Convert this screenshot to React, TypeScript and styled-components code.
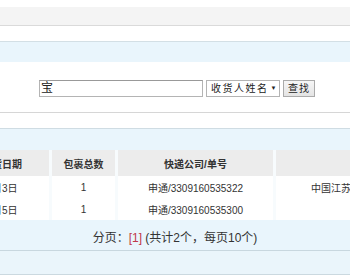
import React from "react";
import styled, { createGlobalStyle } from "styled-components";

const GlobalStyle = createGlobalStyle`
  body {
    margin: 0;
    background: #fff;
    font-family: "Liberation Sans", "Noto Sans CJK SC", sans-serif;
    color: #333;
    overflow: hidden;
  }
`;

const Page = styled.div`
  width: 350px;
  height: 280px;
  overflow: hidden;
  padding-top: 7px;
  box-sizing: border-box;
`;

const TopBar = styled.div`
  height: 18px;
  background: #f4f4f4;
  border-bottom: 1px solid #dadada;
`;

const Gap = styled.div<{ h: number }>`
  height: ${(p) => p.h}px;
  background: #fff;
`;

const TitleBar = styled.div`
  height: 20px;
  border-top: 1px solid #d3dfe5;
  background: #e9f5fc;
`;

const SearchArea = styled.div`
  height: 51px;
  box-sizing: border-box;
  padding: 18px 0 0 39px;
  border-bottom: 1px solid #d6d6d6;
  display: flex;
  align-items: flex-start;
  gap: 3px;
`;

const Input = styled.div`
  width: 164px;
  height: 17px;
  box-sizing: border-box;
  border: 1px solid #b4b4b4;
  border-top-color: #999;
  background: #fff;
  font-size: 12px;
  line-height: 15px;
  padding-left: 1px;
  color: #222;
`;

const Select = styled.div`
  width: 74px;
  height: 17px;
  box-sizing: border-box;
  border: 1px solid #b4b4b4;
  background: #fff;
  font-size: 10px;
  letter-spacing: 1.5px;
  line-height: 15px;
  padding-left: 4px;
  color: #222;
  display: flex;
  align-items: center;
  gap: 2px;
`;

const Arrow = styled.span`
  font-size: 6px;
  letter-spacing: 0;
`;

const Button = styled.div`
  width: 32px;
  height: 17px;
  box-sizing: border-box;
  border: 1px solid #aaa;
  background: linear-gradient(#f6f6f6, #e4e4e4);
  font-size: 10px;
  letter-spacing: 1px;
  line-height: 15px;
  text-align: center;
  color: #222;
`;

const Panel = styled.div`
  border-top: 1px solid #cfdce3;
  background: #e9f5fc;
  padding-top: 21px;
`;

const Table = styled.table`
  width: 527px;
  min-width: 527px;
  margin-left: -48px;
  border-collapse: separate;
  border-spacing: 3px 0;
  background: #f7fbfd;
  font-size: 10px;
  table-layout: fixed;
`;

const Th = styled.th<{ w: number }>`
  width: ${(p) => p.w}px;
  height: 26px;
  padding: 0;
  background: #ececec;
  font-weight: bold;
  color: #333;
  text-align: center;
  white-space: nowrap;
`;

const Td = styled.td`
  height: 22px;
  padding: 0;
  background: #fff;
  text-align: center;
  color: #333;
  white-space: nowrap;
  overflow: hidden;
`;

const Paging = styled.div`
  height: 31px;
  box-sizing: border-box;
  padding-top: 8px;
  line-height: 20px;
  text-align: center;
  font-size: 12px;
  color: #333;
  border-bottom: 1px solid #c8d7df;
`;

const Current = styled.span`
  color: #c0394a;
`;

const Footer = styled.div`
  height: 23px;
  background: #eaf5fb;
  border-bottom: 1px solid #cbd9e0;
`;

const rows = [
  { date: "2月3日", total: 1, express: "申通/3309160535322", addr: "中国江苏省苏州市吴中区某路" },
  { date: "2月5日", total: 1, express: "申通/3309160535300", addr: "" },
];

export default function App() {
  return (
    <Page>
      <GlobalStyle />
      <TopBar />
      <Gap h={15} />
      <TitleBar />
      <SearchArea>
        <Input>宝</Input>
        <Select>
          收货人姓名<Arrow>▼</Arrow>
        </Select>
        <Button>查找</Button>
      </SearchArea>
      <Gap h={15} />
      <Panel>
        <Table>
          <thead>
            <tr>
              <Th w={94}>发货日期</Th>
              <Th w={63}>包裹总数</Th>
              <Th w={155}>快递公司/单号</Th>
              <Th w={200}></Th>
            </tr>
          </thead>
          <tbody>
            {rows.map((r) => (
              <tr key={r.express}>
                <Td>{r.date}</Td>
                <Td>{r.total}</Td>
                <Td>{r.express}</Td>
                <Td>{r.addr}</Td>
              </tr>
            ))}
          </tbody>
        </Table>
        <Paging>
          分页：<Current>[1]</Current> (共计2个，每页10个)
        </Paging>
      </Panel>
      <Footer />
    </Page>
  );
}
